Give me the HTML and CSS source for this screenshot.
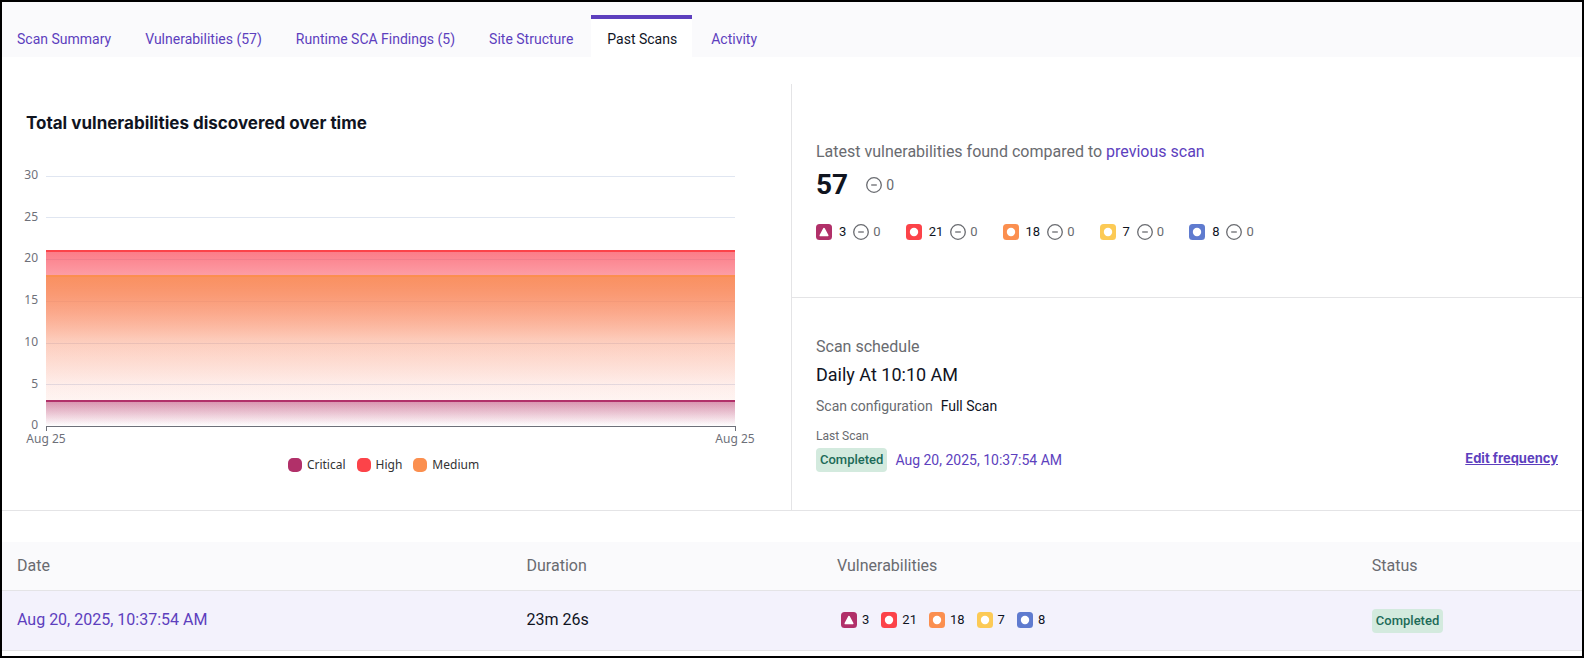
FILE: index.html
```html
<!DOCTYPE html>
<html lang="en">
<head>
<meta charset="utf-8">
<title>Past Scans</title>
<link rel="stylesheet" href="styles.css">
</head>
<body>
<svg class="defs" aria-hidden="true">
  <defs>
    <symbol id="tri" viewBox="0 0 16 16"><rect width="16" height="16" rx="3.5" fill="currentColor"/><path d="M8 4.8 11.6 11.4H4.4Z" fill="#fff" stroke="#fff" stroke-width="1.8" stroke-linejoin="round"/></symbol>
    <symbol id="dot" viewBox="0 0 16 16"><rect width="16" height="16" rx="3.5" fill="currentColor"/><circle cx="8" cy="8" r="4.2" fill="#fff"/></symbol>
    <symbol id="same" viewBox="0 0 16 16"><circle cx="8" cy="8" r="7.3" fill="none" stroke="currentColor" stroke-width="1.3"/><path d="M5.2 8h5.6" stroke="currentColor" stroke-width="1.3"/></symbol>
  </defs>
</svg>
<main class="page">
  <nav class="tabs">
    <a class="tab" href="#">Scan Summary</a>
    <a class="tab" href="#">Vulnerabilities (57)</a>
    <a class="tab" href="#">Runtime SCA Findings (5)</a>
    <a class="tab" href="#">Site Structure</a>
    <a class="tab tab-active" href="#" aria-current="page">Past Scans</a>
    <a class="tab" href="#">Activity</a>
  </nav>

  <div class="overview">
    <section class="trend">
      <h2 class="trend-title">Total vulnerabilities discovered over time</h2>
      <div class="plot">
        <svg class="chart" width="100%" height="280">
          <defs>
            <linearGradient id="g-high" x1="0" y1="0" x2="0" y2="1"><stop offset="0" stop-color="#fa4353" stop-opacity=".7"/><stop offset=".14" stop-color="#fa4353" stop-opacity=".52"/><stop offset=".5" stop-color="#fa4353" stop-opacity=".12"/><stop offset=".85" stop-color="#fa4353" stop-opacity=".03"/><stop offset="1" stop-color="#fa4353" stop-opacity="0"/></linearGradient>
            <linearGradient id="g-medium" x1="0" y1="0" x2="0" y2="1"><stop offset="0" stop-color="#f98f57" stop-opacity=".88"/><stop offset=".17" stop-color="#f98f57" stop-opacity=".65"/><stop offset=".45" stop-color="#f98f57" stop-opacity=".3"/><stop offset=".72" stop-color="#f98f57" stop-opacity=".08"/><stop offset="1" stop-color="#f98f57" stop-opacity="0"/></linearGradient>
            <linearGradient id="g-critical" x1="0" y1="0" x2="0" y2="1"><stop offset="0" stop-color="#b13069" stop-opacity=".5"/><stop offset="1" stop-color="#b13069" stop-opacity="0"/></linearGradient>
          </defs>
          <g class="grid-lines">
            <rect y="6" width="100%" height="1"/><rect y="47" width="100%" height="1"/><rect y="89" width="100%" height="1"/><rect y="131" width="100%" height="1"/><rect y="173" width="100%" height="1"/><rect y="214" width="100%" height="1"/>
          </g>
          <rect y="81" width="100%" height="175" fill="url(#g-high)"/>
          <rect y="106" width="100%" height="150" fill="url(#g-medium)"/>
          <rect y="231" width="100%" height="25" fill="url(#g-critical)"/>
          <rect y="80" width="100%" height="2" fill="#fc4349"/>
          <rect y="105" width="100%" height="2" fill="#fb8f4f"/>
          <rect y="230" width="100%" height="2" fill="#b13069"/>
          <g class="axis">
            <rect y="256" width="100%" height="1"/><rect y="256" width="1" height="5"/><rect x="100%" y="256" width="1" height="5"/>
          </g>
          <g class="y-labels">
            <text x="-8" y="9">30</text><text x="-8" y="51">25</text><text x="-8" y="92">20</text><text x="-8" y="134">15</text><text x="-8" y="176">10</text><text x="-8" y="218">5</text><text x="-8" y="259">0</text>
          </g>
          <g class="x-labels"><text x="0" y="273">Aug 25</text><text x="100%" y="273">Aug 25</text></g>
        </svg>
      </div>
      <ul class="legend">
        <li class="legend-item"><span class="swatch bg-critical"></span>Critical</li>
        <li class="legend-item"><span class="swatch bg-high"></span>High</li>
        <li class="legend-item"><span class="swatch bg-medium"></span>Medium</li>
      </ul>
    </section>

    <div class="side">
      <section class="latest">
        <p class="lead">Latest vulnerabilities found compared to <a href="#">previous scan</a></p>
        <div class="total">
          <strong class="total-value">57</strong>
          <span class="delta"><svg class="icon"><use href="#same"/></svg>0</span>
        </div>
        <ul class="counts">
          <li class="count"><svg class="icon critical"><use href="#tri"/></svg>3<span class="delta"><svg class="icon"><use href="#same"/></svg>0</span></li>
          <li class="count"><svg class="icon high"><use href="#dot"/></svg>21<span class="delta"><svg class="icon"><use href="#same"/></svg>0</span></li>
          <li class="count"><svg class="icon medium"><use href="#dot"/></svg>18<span class="delta"><svg class="icon"><use href="#same"/></svg>0</span></li>
          <li class="count"><svg class="icon low"><use href="#dot"/></svg>7<span class="delta"><svg class="icon"><use href="#same"/></svg>0</span></li>
          <li class="count"><svg class="icon info"><use href="#dot"/></svg>8<span class="delta"><svg class="icon"><use href="#same"/></svg>0</span></li>
        </ul>
      </section>
      <section class="schedule">
        <div class="schedule-info">
          <p class="lead">Scan schedule</p>
          <p class="schedule-time">Daily At 10:10 AM</p>
          <p class="config"><span class="muted">Scan configuration</span><span>Full Scan</span></p>
          <p class="last-label">Last Scan</p>
          <p class="last-scan"><span class="badge">Completed</span><a href="#">Aug 20, 2025, 10:37:54 AM</a></p>
        </div>
        <a class="edit" href="#">Edit frequency</a>
      </section>
    </div>
  </div>

  <table class="scans">
    <thead>
      <tr><th class="col-date">Date</th><th class="col-duration">Duration</th><th class="col-vulns">Vulnerabilities</th><th>Status</th></tr>
    </thead>
    <tbody>
      <tr>
        <td><a href="#">Aug 20, 2025, 10:37:54 AM</a></td>
        <td>23m 26s</td>
        <td>
          <ul class="chips">
            <li class="chip"><svg class="icon critical"><use href="#tri"/></svg>3</li>
            <li class="chip"><svg class="icon high"><use href="#dot"/></svg>21</li>
            <li class="chip"><svg class="icon medium"><use href="#dot"/></svg>18</li>
            <li class="chip"><svg class="icon low"><use href="#dot"/></svg>7</li>
            <li class="chip"><svg class="icon info"><use href="#dot"/></svg>8</li>
          </ul>
        </td>
        <td><span class="badge">Completed</span></td>
      </tr>
    </tbody>
  </table>
</main>
</body>
</html>
```
FILE: styles.css
```css
* { box-sizing: border-box; margin: 0; padding: 0; }
body { font: 14px/20px Roboto, "Liberation Sans", sans-serif; color: #10141f; background: #fff; }
a { color: #5d3fbe; text-decoration: none; }
ul { list-style: none; }
.defs { position: absolute; width: 0; height: 0; }
.page { min-height: 100vh; border: 2px solid #000; }

.tabs { display: flex; gap: 3px; padding-top: 13px; background: #fafafc; }
.tab { padding: 10px 15px 8px; border-top: 4px solid transparent; }
.tab + .tab { padding-left: 16px; }
.tab-active { color: #10141f; background: #fff; border-top-color: #5d3fbe; }

.overview { display: grid; grid-template-columns: 1fr 1fr; margin-top: 27px; border-bottom: 1px solid #e4e4e6; }
.trend { padding: 28px 24px 35px; border-right: 1px solid #e4e4e6; }
.trend-title { font: 700 17px/22px Inter, sans-serif; }
.plot { margin: 36px 32px 0 20px; }
.chart { display: block; overflow: visible; font: 12px "Noto Sans", sans-serif; }
.grid-lines { fill: #e0e6f1; }
.axis { fill: #6e7079; }
.y-labels { fill: #6e7079; text-anchor: end; }
.x-labels { fill: #6e7079; text-anchor: middle; }
.legend { display: flex; justify-content: center; gap: 11px; margin-top: 5px; padding-right: 26px; font: 12px/20px "Noto Sans", sans-serif; color: #333; }
.legend-item { display: flex; align-items: center; gap: 5px; }
.swatch { width: 14px; height: 14px; border-radius: 5px; }
.bg-critical { background: #b13069; }
.bg-high { background: #fc4349; }
.bg-medium { background: #fb8f4f; }

.side { display: grid; grid-template-rows: 214px 1fr; }
.latest { display: flex; flex-direction: column; justify-content: center; padding: 0 24px; border-bottom: 1px solid #e4e4e6; }
.lead { font-size: 16px; line-height: 24px; color: #696b70; }
.total { display: flex; align-items: center; gap: 18px; padding: 3px 0; }
.total-value { font-size: 28px; line-height: 36px; }
.delta { display: flex; align-items: center; gap: 4px; color: #696b70; }
.icon { width: 16px; height: 16px; flex: none; display: block; }
.counts { display: flex; gap: 25px; margin-top: 16px; font-size: 13px; }
.count { display: flex; align-items: center; gap: 7px; }
.critical { color: #b13069; }
.high { color: #fc4349; }
.medium { color: #fb8f4f; }
.low { color: #fcca55; }
.info { color: #5f7bcf; }

.schedule { display: flex; align-items: flex-end; justify-content: space-between; padding: 32px 24px 38px; }
.schedule-time { margin-top: 2px; font-size: 18px; line-height: 28px; }
.config { display: flex; gap: 8px; margin-top: 7px; }
.muted { color: #696b70; }
.last-label { margin-top: 11px; font-size: 12px; line-height: 18px; color: #696b70; }
.last-scan { display: flex; align-items: center; gap: 8px; margin-top: 3px; }
.badge { display: inline-block; padding: 2px 4px; border-radius: 4px; background: #d3eade; color: #1d6b58; font-size: 13px; line-height: 20px; font-weight: 500; }
.edit { padding-bottom: 4px; font: 700 13px/20px Inter, sans-serif; text-decoration: underline; }

.scans { width: 100%; margin-top: 31px; border-collapse: collapse; table-layout: fixed; font-size: 16px; line-height: 24px; }
.scans th { height: 48px; padding: 0 15px; text-align: left; font-weight: 400; color: #696b70; background: #fafafc; border-bottom: 1px solid #e4e4e6; }
.scans td { height: 60px; padding: 0 15px; background: #f3f2fc; border-bottom: 1px solid #e4e4e6; }
.col-date { width: 32.25%; }
.col-duration { width: 19.65%; }
.col-vulns { width: 33.85%; }
.chips { display: flex; gap: 12px; padding-left: 4px; font-size: 13px; }
.chip { display: flex; align-items: center; gap: 5px; }
```
